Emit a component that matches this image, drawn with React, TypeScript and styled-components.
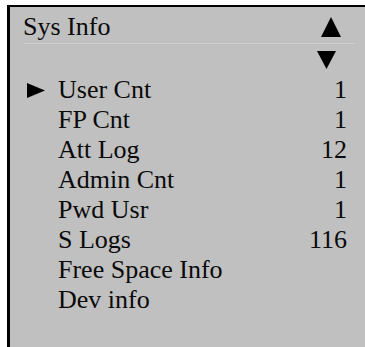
import React from 'react'
import styled, { createGlobalStyle } from 'styled-components';

const GlobalStyle = createGlobalStyle`
  html, body {
    margin: 0;
    padding: 0;
    background: #ffffff;
    overflow: hidden;
  }
`;

const items = [
  { label: 'User Cnt', value: '1', active: true },
  { label: 'FP Cnt', value: '1' },
  { label: 'Att Log', value: '12' },
  { label: 'Admin Cnt', value: '1' },
  { label: 'Pwd Usr', value: '1' },
  { label: 'S Logs', value: '116' },
  { label: 'Free Space Info', value: '' },
  { label: 'Dev info', value: '' },
];

export default function App() {
  return (
    <>
      <GlobalStyle />
      <Screen>
        <Panel>
          <Header>
            <Title>Sys Info</Title>
            <Arrow width="20" height="20" viewBox="0 0 20 20">
              <polygon points="10,0 20,20 0,20" fill="#000" />
            </Arrow>
          </Header>
          <ScrollRow>
            <Arrow width="19" height="18" viewBox="0 0 19 18">
              <polygon points="0,0 19,0 9.5,18" fill="#000" />
            </Arrow>
          </ScrollRow>
          <List>
            {items.map((item) => (
              <Row key={item.label}>
                <Marker>
                  {item.active && (
                    <svg width="18" height="15" viewBox="0 0 18 15">
                      <polygon points="0,0 18,7.5 0,15" fill="#000" />
                    </svg>
                  )}
                </Marker>
                <Label>{item.label}</Label>
                <Value>{item.value}</Value>
              </Row>
            ))}
          </List>
        </Panel>
      </Screen>
    </>
  )
}

const Screen = styled.div`
  width: 365px;
  height: 347px;
  padding: 5px 0 0 7px;
  box-sizing: border-box;
  overflow: hidden;
`;

const Panel = styled.div`
  height: 360px;
  background: #c0c0c0;
  border-top: 2px solid #000;
  border-left: 3px solid #000;
  padding-top: 4px;
  box-sizing: border-box;
  font-family: "Liberation Serif", "Times New Roman", serif;
  font-size: 26px;
  line-height: 30px;
  color: #0a0a0a;
`;

const Header = styled.div`
  display: flex;
  align-items: center;
  justify-content: space-between;
  height: 32px;
  margin-left: 14px;
  margin-right: 10px;
  padding: 0 14px 0 0;
  border-bottom: 1px solid #d0d0d0;
`;

const Title = styled.span`
  margin-left: -1px;
  margin-top: -1px;
`;

const ScrollRow = styled.div`
  display: flex;
  align-items: center;
  justify-content: flex-end;
  height: 31px;
  padding-right: 29px;
`;

const Arrow = styled.svg`
  display: block;
`;

const List = styled.div`
  display: flex;
  flex-direction: column;
`;

const Row = styled.div`
  display: grid;
  grid-template-columns: 34px 1fr auto;
  align-items: center;
  height: 30px;
  padding: 0 18px 0 14px;
`;

const Marker = styled.div`
  display: flex;
  align-items: center;
  padding-left: 3px;
`;

const Label = styled.span`
  white-space: nowrap;
`;

const Value = styled.span`
  text-align: right;
`;
